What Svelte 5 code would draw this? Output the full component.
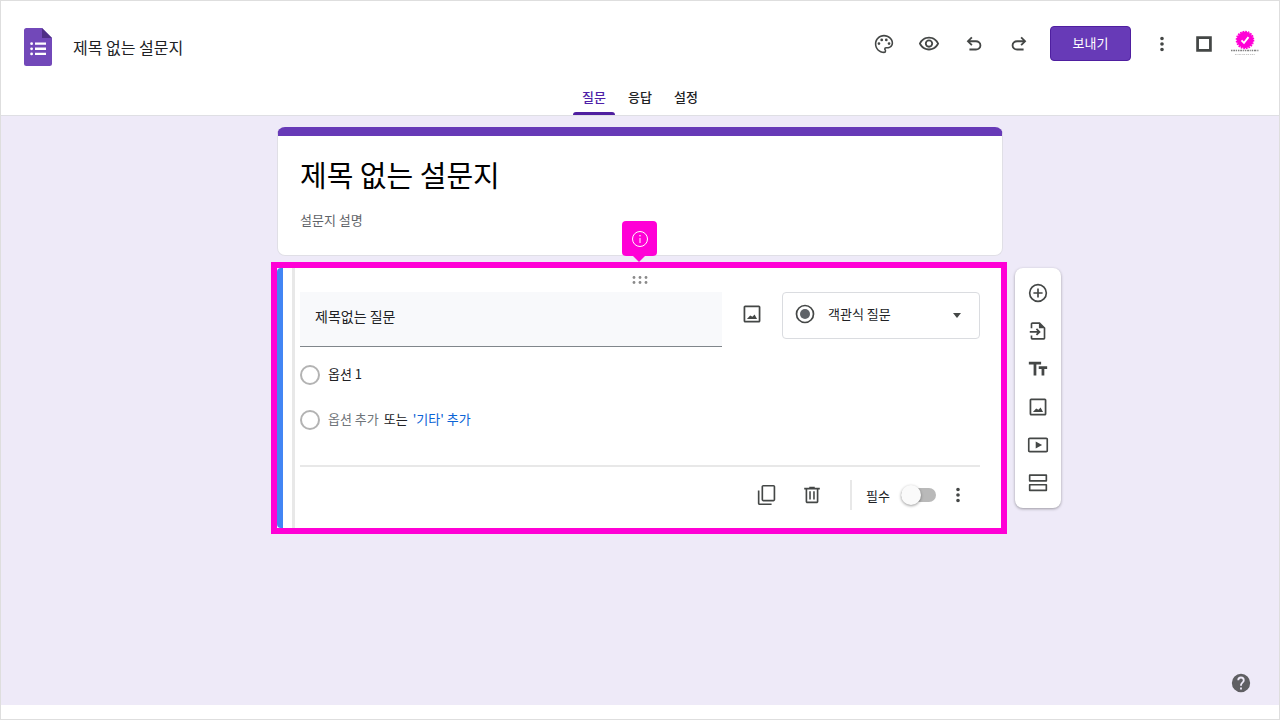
<script>
  const tabs = ["질문", "응답", "설정"];
  const questionTypes = ["단답형", "장문형", "객관식 질문", "체크박스", "드롭다운"];

  let activeTab = $state("질문");
  let title = $state("제목 없는 설문지");
  let heading = $state("제목 없는 설문지");
  let description = $state("");
  let question = $state("제목없는 질문");
  let questionType = $state("객관식 질문");
  let option = $state("옵션 1");
  let required = $state(false);

  const icons = {
    palette: "M12 22C6.49 22 2 17.51 2 12S6.49 2 12 2s10 4.04 10 9c0 3.31-2.69 6-6 6h-1.77c-.28 0-.5.22-.5.5 0 .12.05.23.13.33.41.47.64 1.06.64 1.67A2.5 2.5 0 0 1 12 22zm0-18.300c-4.580 0-8.300 3.700-8.300 8.300s3.720 8.300 8.300 8.300c.4 0 .8-.300.8-.800 0-.2-.06-.400-.2-.6-.4-.4-.6-.9-.6-1.400a2.200 2.200 0 0 1 2.200-2.200H16c2.400 0 4.300-1.900 4.300-4.300 0-4-3.700-7.300-8.300-7.300zM5 11.5a1.5 1.5 0 1 0 3 0 1.5 1.5 0 1 0-3 0zM8 7.5a1.5 1.5 0 1 0 3 0 1.5 1.5 0 1 0-3 0zM13 7.5a1.5 1.5 0 1 0 3 0 1.5 1.5 0 1 0-3 0zM16 11.5a1.5 1.5 0 1 0 3 0 1.5 1.5 0 1 0-3 0z",
    preview: "M12 6c3.79 0 7.17 2.13 8.82 5.5C19.17 14.87 15.79 17 12 17s-7.17-2.13-8.82-5.5C4.83 8.13 8.21 6 12 6m0-2C7 4 2.73 7.11 1 11.5 2.73 15.89 7 19 12 19s9.27-3.11 11-7.5C21.27 7.11 17 4 12 4zm0 5a2.5 2.5 0 0 1 0 5 2.5 2.5 0 0 1 0-5m0-2c-2.48 0-4.5 2.02-4.5 4.5S9.52 16 12 16s4.5-2.02 4.5-4.5S14.48 7 12 7z",
    undo: "M7 19v-2h7.1q1.575 0 2.738-1T18 13.5 16.838 11 14.1 10H7.8l2.6 2.6L9 14 4 9l5-5 1.4 1.4L7.8 8h6.3q2.425 0 4.163 1.575T20 13.5t-1.737 3.925T14.1 19z",
    redo: "M17 19v-2H9.9q-1.575 0-2.738-1T6 13.5 7.162 11 9.9 10h6.3l-2.6 2.6L15 14l5-5-5-5-1.4 1.4L16.2 8H9.9q-2.425 0-4.163 1.575T4 13.5t1.737 3.925T9.9 19z",
    more: "M12 8a2 2 0 1 0 0-4 2 2 0 0 0 0 4zm0 2a2 2 0 1 0 0 4 2 2 0 0 0 0-4zm0 6a2 2 0 1 0 0 4 2 2 0 0 0 0-4z",
    square: "M3.500 3.500h17v17h-17zM6.5 6.5v11h11v-11z",
    image: "M19.300 4.700v14.600H4.700V4.700h14.600m.2-1.900h-15c-.9 0-1.700.8-1.700 1.700v15c0 .9.8 1.700 1.700 1.700h15c.9 0 1.700-.8 1.700-1.700v-15c0-.9-.8-1.700-1.700-1.700zM14.800 12.500l-2.300 2.600-2.500-1.400L6.500 17.500h11z",
    copy: "M8 1c-1.100 0-2 .9-2 2v14c0 1.100.9 2 2 2h11c1.100 0 2-.9 2-2V3c0-1.100-.9-2-2-2zM19.200 17.200H7.800V2.800h11.400zM2 7h1.800v14.200H17V23H4c-1.100 0-2-.9-2-2z",
    trash: "M15 4V3H9v1H3.500v1.900H5V19c0 1.100.9 2 2 2h10c1.100 0 2-.9 2-2V5.900h1.500V4zm2.200 15.200H6.800V5.900h10.400zM9 8h1.700v9H9zM13.300 8H15v9h-1.700z",
    add: "M12.900 7h-1.800v4.100H7v1.800h4.100V17h1.800v-4.100H17v-1.800h-4.100zM12 2a10 10 0 1 0 0 20 10 10 0 0 0 0-20zm0 18.200a8.200 8.200 0 1 1 0-16.400 8.200 8.200 0 0 1 0 16.400z",
    importFile: "M14 2.500H6c-1.100 0-2 .9-2 2V9h1.800V4.300H13V9h5.200v10.700H5.800V17H4v2.500c0 1.100.9 2 2 2h12c1.100 0 2-.9 2-2v-11zM3 12.100h8.200l-1.600-1.700L11 9l4 4-4 4-1.400-1.400 1.600-1.700H3z",
    text: "M2 4v3h5.200v12h3V7h5.200V4zM22 9h-9.200v3h3.100v7h3v-7H22z",
    video: "M9.500 8.200v7.600l7-3.800zM21 3.800H3c-1.100 0-2 .8-2 1.800v12.800c0 1 .9 1.800 2 1.800h18c1.100 0 2-.8 2-1.800V5.600c0-1-.9-1.800-2-1.800zm.2 14.600H2.800V5.600h18.400z",
    section: "M21 13H3c-.6 0-1 .4-1 1v6c0 .6.4 1 1 1h18c.6 0 1-.4 1-1v-6c0-.6-.4-1-1-1zm-.8 6.200H3.800v-4.400h16.400zM21 2.500H3c-.6 0-1 .4-1 1v6c0 .6.4 1 1 1h18c.6 0 1-.4 1-1v-6c0-.6-.4-1-1-1zm-.8 6.200H3.800V4.300h16.400z",
    help: "M12 2a10 10 0 1 0 0 20 10 10 0 0 0 0-20zm1 17h-2v-2h2zm2.070-7.750-.9.920C13.450 12.900 13 13.500 13 15h-2v-.500c0-1.100.450-2.100 1.170-2.830l1.240-1.260c.370-.360.590-.860.590-1.410a2 2 0 1 0-4 0H8a4 4 0 1 1 8 0c0 .880-.360 1.680-.930 2.250z",
  };

  const history = [
    { name: "palette", label: "테마 맞춤설정" },
    { name: "preview", label: "미리보기" },
    { name: "undo", label: "실행취소" },
    { name: "redo", label: "재실행" },
  ];

  const tools = [
    { name: "add", label: "질문 추가" },
    { name: "importFile", label: "질문 가져오기" },
    { name: "text", label: "제목 및 설명 추가" },
    { name: "image", label: "이미지 추가" },
    { name: "video", label: "동영상 추가" },
    { name: "section", label: "섹션 추가" },
  ];
</script>

{#snippet icon(name)}
  <svg class="icon" viewBox="0 0 24 24" aria-hidden="true"><path fill-rule="evenodd" d={icons[name]} /></svg>
{/snippet}

<div class="page">
  <header>
    <div class="bar">
      <div class="brand">
        <svg class="logo" viewBox="0 0 28 38" aria-hidden="true">
          <path fill="#7248b9" d="M2.500 0H18l10 10v25.500a2.500 2.500 0 0 1-2.500 2.500h-23A2.500 2.500 0 0 1 0 35.500v-33A2.500 2.500 0 0 1 2.500 0z" />
          <path fill="#4f2f86" d="M18 0l10 10H18z" />
          <path fill="#fff" d="M11 14.500h11v2.300H11zM11 19.600h11v2.300H11zM11 24.700h11V27H11z" />
          <circle cx="7.600" cy="15.700" r="1.400" fill="#fff" />
          <circle cx="7.600" cy="20.800" r="1.400" fill="#fff" />
          <circle cx="7.600" cy="25.900" r="1.400" fill="#fff" />
        </svg>
        <input class="doc-name" aria-label="문서 이름" bind:value={title} />
      </div>
      <div class="actions">
        <div class="history">
          {#each history as item}
            <button class="ib" aria-label={item.label}>{@render icon(item.name)}</button>
          {/each}
        </div>
        <button class="send">보내기</button>
        <button class="ib" aria-label="더보기">{@render icon("more")}</button>
        <button class="ib" aria-label="앱">{@render icon("square")}</button>
        <button class="avatar" aria-label="계정">
          <svg viewBox="0 0 28 28" aria-hidden="true">
            <circle cx="14" cy="10" r="8.300" fill="#ff00d6" />
            <circle cx="14" cy="10" r="8.600" fill="none" stroke="#ff00d6" stroke-width="1.400" stroke-dasharray="1.700 1" />
            <path d="M10.500 10.300l2.500 2.500 4.500-5.600" fill="none" stroke="#fff" stroke-width="1.900" />
            <path d="M0 20.500h28" stroke="#555" stroke-width="1.600" stroke-dasharray="1.500 .8 2 .7 1 .9" opacity=".75" />
            <path d="M4 24.500h20" stroke="#aaa" stroke-dasharray="1.500 1 1 .7" opacity=".7" />
          </svg>
        </button>
      </div>
    </div>
    <nav class="tabs">
      {#each tabs as tab}
        <button class="tab" class:active={tab === activeTab} onclick={() => (activeTab = tab)}>{tab}</button>
      {/each}
    </nav>
  </header>

  <main>
    <section class="card intro">
      <input class="heading" aria-label="설문지 제목" bind:value={heading} />
      <input class="desc" aria-label="설문지 설명" placeholder="설문지 설명" bind:value={description} />
    </section>

    <section class="frame">
      <div class="badge">
        <svg viewBox="0 0 18 18" aria-hidden="true">
          <circle cx="9" cy="9" r="7.500" fill="none" stroke="#fff" />
          <path d="M9 8v5" stroke="#fff" />
          <circle cx="9" cy="5.700" r=".8" fill="#fff" />
        </svg>
      </div>

      <div class="question">
        <div class="inner">
          <div class="drag">
            <svg viewBox="0 0 16 8" aria-hidden="true">
              {#each [2, 8, 14] as x}
                <circle cx={x} cy="1.500" r="1.400" />
                <circle cx={x} cy="6.500" r="1.400" />
              {/each}
            </svg>
          </div>

          <div class="row">
            <input class="question-title" aria-label="질문" bind:value={question} />
            <button class="ib" aria-label="이미지 추가">{@render icon("image")}</button>
            <div class="type">
              <svg class="type-radio" viewBox="0 0 20 20" aria-hidden="true">
                <circle cx="10" cy="10" r="8.500" fill="none" stroke="#444746" stroke-width="1.700" />
                <circle cx="10" cy="10" r="5" fill="#5f6368" />
              </svg>
              <select aria-label="질문 유형" bind:value={questionType}>
                {#each questionTypes as t}<option value={t}>{t}</option>{/each}
              </select>
              <svg class="arrow" viewBox="0 0 10 5" aria-hidden="true"><path d="M1 0h8L5 5z" /></svg>
            </div>
          </div>

          <div class="options">
            <div class="option">
              <input type="radio" name="answer" aria-label="옵션 1" />
              <input class="option-text" aria-label="옵션 값" bind:value={option} />
            </div>
            <div class="option">
              <input type="radio" name="answer" aria-label="옵션 추가" />
              <button class="add-option">옵션 추가</button>
              <span class="or">또는</span>
              <button class="add-other">'기타' 추가</button>
            </div>
          </div>

          <div class="foot">
            <button class="ib" aria-label="복사">{@render icon("copy")}</button>
            <button class="ib trash" aria-label="삭제">{@render icon("trash")}</button>
            <label class="required">
              필수
              <input type="checkbox" role="switch" bind:checked={required} />
            </label>
            <button class="ib" aria-label="옵션 더보기">{@render icon("more")}</button>
          </div>
        </div>
      </div>
    </section>

    <aside class="tools">
      {#each tools as tool}
        <button class="tool" aria-label={tool.label}>{@render icon(tool.name)}</button>
      {/each}
    </aside>

    <button class="help" aria-label="도움말">{@render icon("help")}</button>
  </main>
</div>

<style>
  :global(body) { background: #fff; }

  .page {
    box-sizing: border-box;
    min-height: 100vh;
    display: flex;
    flex-direction: column;
    padding-bottom: 14px;
    border: 1px solid #dedede;
    font-family: "Noto Sans CJK KR", "Noto Sans", sans-serif;
    font-size: 13px;
    color: #202124;
  }

  .page * { box-sizing: border-box; }

  button, input, select {
    font: inherit;
    color: inherit;
    background: none;
    border: 0;
    padding: 0;
    margin: 0;
    min-width: 0;
  }

  button, select { cursor: pointer; }

  .icon { width: 22px; height: 22px; display: block; fill: currentColor; }
  .ib { flex: none; width: 22px; height: 22px; color: #444746; }

  /* header */
  header { padding-top: 25px; border-bottom: 1px solid #dfdfe4; }

  .bar {
    height: 40px;
    display: flex;
    align-items: flex-start;
    justify-content: space-between;
    padding: 0 20px 0 23px;
  }

  .brand { display: flex; align-items: center; gap: 21px; padding-top: 2px; }
  .logo { width: 28px; height: 38px; }
  .doc-name { width: 240px; height: 28px; font-size: 16px; }

  .actions { display: flex; align-items: center; gap: 20px; }
  .history { display: flex; gap: 23px; }

  .send {
    width: 81px;
    height: 35px;
    padding-bottom: 2px;
    border: 1px solid #4f1fa0;
    border-radius: 4px;
    background: #673ab7;
    color: #fff;
  }

  .avatar { width: 28px; height: 28px; margin-left: -4px; }
  .avatar svg { display: block; width: 28px; height: 28px; }

  .tabs { display: flex; justify-content: center; gap: 4px; margin-top: 14px; }
  .tab {
    width: 42px;
    height: 35px;
    padding-bottom: 2px;
    font-weight: 500;
    position: relative;
  }
  .tab.active { color: #4f1fa8; }
  .tab.active::after {
    content: "";
    position: absolute;
    left: 0;
    right: 0;
    bottom: 0;
    height: 3px;
    border-radius: 3px 3px 0 0;
    background: #4f1fa0;
  }

  /* canvas */
  main {
    flex: 1;
    position: relative;
    display: grid;
    grid-template-columns: minmax(0, 1fr) minmax(0, 736px) minmax(54px, 1fr);
    grid-template-rows: auto 1fr;
    align-items: start;
    row-gap: 6px;
    padding: 11px 2px 24px 0;
    background: #eeeaf8;
  }

  .intro {
    grid-column: 2;
    display: flex;
    flex-direction: column;
    margin: 0 4px 0 6px;
    padding: 18px 22px 25px;
    background: #fff;
    border: 1px solid #e0dfe6;
    border-top: 9px solid #673ab7;
    border-radius: 8px;
  }
  .heading { height: 40px; font-size: 29px; color: #000; }
  .desc { height: 22px; margin-top: 14px; }
  .desc::placeholder { color: #5f6368; opacity: 1; }

  .frame { grid-column: 2; position: relative; border: 6px solid #ff00d6; background: #fff; }

  .badge {
    position: absolute;
    left: 50%;
    bottom: 100%;
    width: 35px;
    height: 35px;
    margin: 0 0 12px -17px;
    display: flex;
    align-items: center;
    justify-content: center;
    border-radius: 4px;
    background: #ff00d6;
  }
  .badge::after {
    content: "";
    position: absolute;
    top: 100%;
    left: 11px;
    border: 6px solid transparent;
    border-top-color: #ff00d6;
    border-bottom: 0;
  }
  .badge svg { width: 18px; height: 18px; }

  .question { padding-left: 9px; border-left: 6px solid #4285f4; border-radius: 4px 0 0 4px; }
  .inner { padding: 0 21px 0 5px; border-left: 3px solid #e8e8e8; }

  .drag { height: 24px; display: flex; align-items: center; justify-content: center; }
  .drag svg { width: 16px; height: 8px; fill: #8a8a8a; }

  .row { display: flex; align-items: flex-start; }
  .row .ib { margin: 11px 19px 0; }

  .question-title {
    flex: 1;
    height: 55px;
    padding: 0 15px 6px;
    font-size: 14px;
    background: #f8f9fb;
    border-bottom: 1px solid #80868b;
  }

  .type { position: relative; flex: 0 1 198px; min-width: 0; }
  .type select {
    appearance: none;
    width: 100%;
    height: 47px;
    padding: 0 30px 4px 45px;
    border: 1px solid #dadce0;
    border-radius: 4px;
  }
  .type-radio { position: absolute; left: 13px; top: 12px; width: 20px; height: 20px; }
  .arrow { position: absolute; right: 18px; top: 21px; width: 10px; height: 5px; fill: #444746; }

  .options { margin-top: 5px; }
  .option { display: flex; align-items: center; height: 45px; }
  .option input[type="radio"] {
    appearance: none;
    width: 20px;
    height: 20px;
    margin-right: 8px;
    border: 2px solid #b3b3b3;
    border-radius: 50%;
  }
  .option-text { flex: 1; padding-bottom: 2px; }
  .add-option { padding-bottom: 2px; color: #70757a; }
  .or { margin: 0 5px; padding-bottom: 2px; }
  .add-other { padding-bottom: 2px; color: #0b63d6; }

  .foot {
    display: flex;
    align-items: center;
    justify-content: flex-end;
    height: 63px;
    margin-top: 23px;
    padding-bottom: 5px;
    border-top: 2px solid #e8e8e8;
  }
  .trash { margin: 0 27px 0 23px; }

  .required {
    display: flex;
    align-items: center;
    gap: 11px;
    height: 30px;
    margin-right: 11px;
    padding-left: 14px;
    border-left: 2px solid #e8e8e8;
  }
  .required input {
    appearance: none;
    position: relative;
    width: 35px;
    height: 14px;
    border-radius: 7px;
    background: #b9b9b9;
    cursor: pointer;
  }
  .required input::before {
    content: "";
    position: absolute;
    left: 0;
    top: -3px;
    width: 20px;
    height: 20px;
    border-radius: 50%;
    background: #fafafa;
    box-shadow: 0 1px 3px rgba(0, 0, 0, 0.4);
  }
  .required input:checked { background: #b39ddb; }
  .required input:checked::before { left: 15px; background: #673ab7; }
  .foot > .ib:last-child { margin-right: 11px; }

  .tools {
    grid-column: 3;
    width: 46px;
    margin: 6px 0 0 8px;
    padding: 6px 0;
    border-radius: 8px;
    background: #fff;
    box-shadow: 0 1px 3px rgba(0, 0, 0, 0.35);
  }
  .tool {
    display: flex;
    align-items: center;
    justify-content: center;
    width: 100%;
    height: 38px;
    color: #444746;
  }

  .help { position: absolute; right: 27px; bottom: 11px; color: #5f5f63; }
</style>
